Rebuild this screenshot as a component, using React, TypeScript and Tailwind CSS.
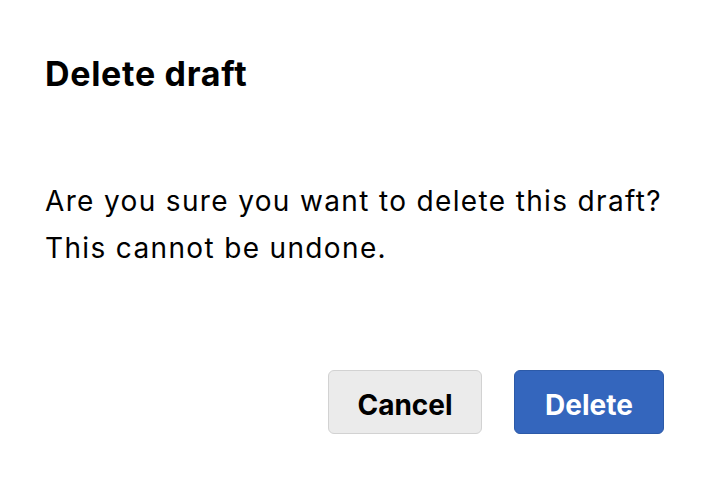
const App = () => {
  return (
    <div
      className="w-[710px] h-[482px] bg-white flex flex-col text-black"
      style={{ fontFamily: "Inter, 'Liberation Sans', sans-serif" }}
    >
      <div className="flex flex-col flex-1 pl-[45px] pr-[46px] pt-[54px] pb-[48px]">
        <h1 className="text-[34px] leading-[40px] font-bold tracking-[0.7px]">Delete draft</h1>

        <p className="mt-[84px] text-[28px] leading-[47px] tracking-[1.35px]">
          Are you sure you want to delete this draft?
          <br />
          This cannot be undone.
        </p>

        <div className="mt-auto flex justify-end gap-[32px]">
          <button className="w-[154px] h-[64px] pt-[5px] rounded-[6px] border border-[#d2d2d2] bg-[#ebebeb] text-[28px] font-bold">
            Cancel
          </button>
          <button className="w-[150px] h-[64px] pt-[5px] rounded-[6px] border border-[#2c5aa8] bg-[#3466bd] text-white text-[28px] font-bold">
            Delete
          </button>
        </div>
      </div>
    </div>
  );
};

export default App;
